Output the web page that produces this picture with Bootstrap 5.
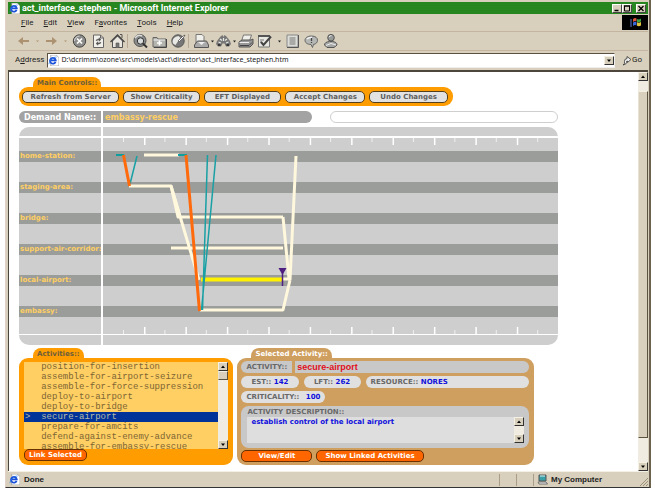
<!DOCTYPE html>
<html lang="en">
<head>
<meta charset="utf-8">
<meta name="viewport" content="width=device-width, initial-scale=1">
<title>act_interface_stephen - Microsoft Internet Explorer</title>
<link href="https://cdn.jsdelivr.net/npm/bootstrap@5.3.0/dist/css/bootstrap.min.css" rel="stylesheet">
<style>
:root{--face:#d8d0bc;--orange:#ff9c00;--tan:#cf9f60;--grey:#cecece;--band:#9b9d9a}
body{background:#fff;font:8px/10px Roboto,"Liberation Sans",Arial,sans-serif;color:#222}
button,select,input,textarea{font:inherit;color:inherit;border:0;padding:0;margin:0;border-radius:0}
a{color:inherit;text-decoration:none}
svg{display:block}
.win{min-height:100vh;padding:0 4px 3px 5px}
.frame{background:var(--face);border-right:2px solid #6b6250;border-bottom:1px solid #333;border-left:1px solid #e0d2c6;padding:2px 1px 0 2px;flex:1}
.titlebar{background:#27861f;color:#fff;font-size:9px;font-weight:700;height:12px;padding:0 2px 0 1px;gap:2px}
.capbtn{width:10px;height:9px;background:var(--face);border:1px solid;border-color:#fff #444 #444 #fff}
.menubar{height:18px;border-bottom:1px solid #c4b5a0}
.menubar nav{gap:10px;padding-left:13px}
.flag{background:#000;width:26px;height:15px}
.tools{height:19px;padding-left:6px;border-bottom:1px solid #c4b5a0}
.tb{width:19px;height:18px;background:none}
.dd{width:9px}.dd.slim{width:3px}
.sepr{width:4px;height:14px;border-left:1px solid #b7a995}
.addr{height:19px;padding:0 2px 1px 7px;gap:3px}
.addrbox{background:#fff;border:1px solid;border-color:#5a5142 #eee #eee #5a5142;height:15px;gap:2px}
.addrbox input{background:none;outline:0;height:12px;font:7px/12px "Noto Sans","Open Sans",sans-serif}
.view{border:1px solid;border-width:2px 0 0 1px;border-color:#4c463c;background:#fff;flex:1}
.page{width:calc(100% - 90px);margin-left:10px;padding:5px 0;font-family:"DejaVu Sans",Verdana,sans-serif;font-weight:700;font-size:7px}
.sbar{width:10px;background:#f0ece2}
.sbtn{width:10px;height:9px;background:var(--face);border:1px solid;border-color:#f4f0e4 #333 #333 #f4f0e4}
.thumb{background:var(--face);border:1px solid;border-color:#f4f0e4 #5b523f #5b523f #e8e2d2}
.t1{flex:10}.t2{flex:346}.t3{flex:24}
.tab{height:10px;border-radius:8px 8px 0 0;padding:0 4px;margin-left:14px;width:max-content;line-height:12px;color:#6d5f3c}
.or{background:var(--orange)}.tn{background:var(--tan)}
.ctrls{width:80.5%;border-radius:9px;padding:4px 5px 3px 3px;display:grid;grid-template-columns:98fr 77fr 78fr 81fr 79fr;gap:4px}
.pillbtn{height:12px;border-radius:5px;border:1px solid #55401c;background:#e2e2e2;color:#5e5e5e;line-height:9px;white-space:nowrap}
.hot{background:#ff6600;color:#fff;border-color:#6b3200}
.demand{display:grid;grid-template-columns:82px 210fr 14fr 229fr;gap:0 2px;margin:5px 0 4px;font-size:8px;line-height:13px}
.demand>*{height:12px}
.dlabel{background:#a3a3a3;color:#fff;border-radius:7px 0 0 7px;padding-left:5px}
.dval{background:#a3a3a3;color:#ffcf63;border-radius:0 7px 7px 0;padding-left:2px}
.dempty{border:1px solid #cfcfcf;border-radius:7px;background:#fff;width:100%;grid-column:4}
.chart{display:grid;grid-template-columns:82px 1fr;gap:2px;border-radius:10px;overflow:hidden;height:218px}
.names{background:var(--grey);overflow:hidden}
.names .cap{height:11px;border-bottom:2px solid #fff;margin-bottom:13px}
.names .lane{height:11px;line-height:11px;margin-bottom:20px;background:var(--band);color:#ffcf63;padding-left:1px;white-space:nowrap}
.names .foot{height:11px;border-top:1px solid #fff;margin-top:-3px}
.plot{width:100%;height:218px;background:var(--grey)}
.panels{display:grid;grid-template-columns:214fr 296fr 20fr;gap:4px;margin-top:3px}
.panelbox{border-radius:9px;padding:4px 5px;height:107px}
.acts{height:87px;background:#ffcf63}
.acts select{appearance:none;-webkit-appearance:none;background:#ffcf63;font:9px/10px "Liberation Mono",monospace;color:#7d6534;scrollbar-width:none;overflow:hidden;outline:0;height:87px;min-width:0}
.acts select::-webkit-scrollbar{display:none}
.acts option{padding:0 0 0 1px;height:10px;min-height:10px;line-height:10px}
.acts option:checked{background:#003399 linear-gradient(#003399,#003399);color:#b5b9a6}
.sel{padding:3px 5px 3px 4px;color:#686868}
.g{background:#c8c8c8}.lt{background:#e0e0e0}
.fields{gap:3px;margin-bottom:3px}
.fld{height:12px;line-height:12px;padding:0 5px;white-space:nowrap}
.trio{display:grid;grid-template-columns:57fr 57fr 163fr;gap:5px;margin-bottom:3px}
.chosen{color:#e0101c;font:700 9px/12px "Liberation Sans",Arial,sans-serif;padding-left:2px}
.val{color:#1010dd}
.desc{border-radius:8px;padding:1px 5px 5px 6px;height:42px;margin:3px 0 2px}
.desc label{height:10px;line-height:11px}
.desc textarea{background:#dedede;color:#1010dd;resize:none;height:26px;line-height:10px;padding:0 4px;outline:0;overflow:hidden}
.status{height:16px;font:700 8px/10px "Liberation Sans",Arial,sans-serif;border-top:1px solid #f4f0e6;padding-left:1px;color:#222}
.cell{height:12px;border-left:1px solid #a99d87}
.zone{width:18%;gap:3px;padding-left:3px}
</style>
<script src="https://cdn.jsdelivr.net/npm/bootstrap@5.3.0/dist/js/bootstrap.bundle.min.js"></script>
</head>
<body>
<svg width="0" height="0" class="position-absolute">
<symbol id="ie" viewBox="0 0 12 12"><path d="M3 0h6l3 3v9H3z" fill="#fff" stroke="#888" stroke-width=".7"/><path d="M8.300 7.500A3.200 3.200 0 1 1 8.500 5.800H3" fill="none" stroke="#1b50d8" stroke-width="1.900"/><path d="M1 10C2 5 6 2 9.500 2.300" fill="none" stroke="#2b7bea" stroke-width=".8"/></symbol>
<symbol id="up" viewBox="0 0 8 7"><path d="M2 5h4L4 2.500z" fill="#000"/></symbol>
<symbol id="dn" viewBox="0 0 8 7"><path d="M2 2.500h4L4 5z" fill="#000"/></symbol>
</svg>
<div class="win d-flex flex-column">
<div class="frame d-flex flex-column">
  <header class="titlebar d-flex align-items-center">
    <svg width="11" height="11"><use href="#ie"/></svg>
    <span class="flex-grow-1">act_interface_stephen - Microsoft Internet Explorer</span>
    <div class="d-flex">
      <button class="capbtn" aria-label="Minimize"><svg width="8" height="7"><path d="M1.500 5.500h4" stroke="#000" stroke-width="1.500"/></svg></button>
      <button class="capbtn" aria-label="Maximize"><svg width="8" height="7"><path d="M1.500 1v5h5V1" fill="none" stroke="#000"/><path d="M1 1h6" stroke="#000" stroke-width="1.500"/></svg></button>
      <button class="capbtn ms-1" aria-label="Close"><svg width="8" height="7"><path d="M1.500 1l5 5M6.500 1l-5 5" stroke="#000" stroke-width="1.300"/></svg></button>
    </div>
  </header>
  <div class="menubar d-flex align-items-center justify-content-between">
    <nav class="d-flex"><a href="#"><u>F</u>ile</a><a href="#"><u>E</u>dit</a><a href="#"><u>V</u>iew</a><a href="#">F<u>a</u>vorites</a><a href="#"><u>T</u>ools</a><a href="#"><u>H</u>elp</a></nav>
    <div class="flag d-flex align-items-center justify-content-center"><svg width="13" height="11" viewBox="0 0 13 11"><path d="M4 2q2-1.500 3.500-.5v3Q6 3.500 4 5z" fill="#d8553a"/><path d="M8 2q2 1 4-.5v3q-2 1.300-4 .5z" fill="#3aa548"/><path d="M4 5.500q2-1.300 3.500-.5v3.500Q6 7.500 4 9z" fill="#3a66d8"/><path d="M8 5.300q2 1 4-.3v3.500q-2 1.300-4 .3z" fill="#e0c33a"/><path d="M1 3h2M1 5h2M1 7h2M1 9h2" stroke="#5b7bd0"/></svg></div>
  </div>
  <div class="tools d-flex align-items-center">
    <button class="tb" aria-label="Back"><svg width="19" height="16" viewBox="0 0 19 16"><path d="M4 8l5-4v3h6v2H9v3z" fill="#ac9271"/></svg></button>
    <svg class="dd" height="8" viewBox="0 0 9 8"><path d="M3 3.500h3L4.500 5z" fill="#ac9271"/></svg>
    <button class="tb" aria-label="Forward"><svg width="19" height="16" viewBox="0 0 19 16"><path d="M15 8l-5-4v3H4v2h6v3z" fill="#ac9271"/></svg></button>
    <svg class="dd" height="8" viewBox="0 0 9 8"><path d="M3 3.500h3L4.500 5z" fill="#ac9271"/></svg>
    <button class="tb" aria-label="Stop"><svg width="19" height="16" viewBox="0 0 19 16"><circle cx="9.500" cy="8" r="6.200" fill="#8c8c8a" stroke="#444"/><path d="M4.500 8a5 5 0 0 1 5-5" stroke="#ddd" fill="none"/><path d="M7 5.500l5 5M12 5.500l-5 5" stroke="#fff" stroke-width="1.700"/></svg></button>
    <button class="tb" aria-label="Refresh"><svg width="19" height="16" viewBox="0 0 19 16"><path d="M4.500 2h7l3 3v9.500h-10z" fill="#f2f0ea" stroke="#666"/><path d="M11.500 2v3h3" fill="none" stroke="#666"/><path d="M7 8q0-2 3-2V4.800L12 6.500l-2 1.700V7M12 9q0 2-3 2v1.200L7 10.500 9 8.800V10" fill="#555" stroke="#555" stroke-width=".5"/></svg></button>
    <button class="tb" aria-label="Home"><svg width="19" height="16" viewBox="0 0 19 16"><path d="M4.500 8v6.500h10V8l-5-5z" fill="#e9e7e0" stroke="#555"/><path d="M2.500 9l7-7 7 7" fill="none" stroke="#444" stroke-width="1.300"/><path d="M12 1.500h2V5" fill="none" stroke="#555"/><path d="M8 14.500V10h3v4.500" fill="#777" stroke="#555" stroke-width=".6"/></svg></button>
    <span class="sepr"></span>
    <button class="tb" aria-label="Search"><svg width="19" height="16" viewBox="0 0 19 16"><circle cx="9" cy="7.500" r="6" fill="#8a8c8c" stroke="#555"/><path d="M4 5q3-4 7-2" stroke="#ddd" stroke-width="1.500" fill="none"/><circle cx="9.500" cy="8" r="3.200" fill="#d8dcdc" stroke="#333"/><path d="M12 10.500l4 4" stroke="#333" stroke-width="2"/></svg></button>
    <button class="tb" aria-label="Favorites"><svg width="19" height="16" viewBox="0 0 19 16"><path d="M3 4.500h4l1 1.500h8v8H3z" fill="#b5b5b0" stroke="#666"/><path d="M3.500 7H15" stroke="#eee"/><path d="M9.500 7.500v5M7 10h5" stroke="#fff" stroke-width="1.600"/><path d="M16.500 6v8.500H4" fill="none" stroke="#444"/></svg></button>
    <button class="tb" aria-label="History"><svg width="19" height="16" viewBox="0 0 19 16"><circle cx="9" cy="8" r="6.200" fill="#777" stroke="#555"/><path d="M3.500 9q0-5 6-6l2 2-3 4-2 3q-3-1-3-3z" fill="#e8e8e4"/><path d="M9 8l5-5 2-1-1 2-5 5z" fill="#fff" stroke="#333" stroke-width=".6"/></svg></button>
    <span class="sepr"></span>
    <button class="tb" aria-label="Mail"><svg width="19" height="16" viewBox="0 0 19 16"><path d="M4 1.500h6l2 2V10H4z" fill="#f0efea" stroke="#777"/><path d="M2.500 12l3-4h9l2 4v2.500h-14z" fill="#aaa" stroke="#555"/><path d="M6 9h7l-3.500 3z" fill="#eee"/></svg></button>
    <svg class="dd slim" height="8" viewBox="0 0 3 8"><path d="M0 3.500h3L1.500 5.500z" fill="#222"/></svg>
    <button class="tb" aria-label="Find"><svg width="19" height="16" viewBox="0 0 19 16"><path d="M6.500 3.500L8.500 2l1 2 1-2 2 1.500 3.500 4.500 1 3-2 2.500h-3l-1.500-3h-2L7 13.500H4L2 11l1-3z" fill="#777"/><path d="M6 6l2 1.500M13 6l-2 1.500M4.500 9l2.500 1M14.500 9L12 10M9.500 5v3" stroke="#e8e8e4" stroke-width="1.200"/><path d="M4 12h2.500M12.500 12H15" stroke="#222" stroke-width="1.300"/></svg></button>
    <svg class="dd slim" height="8" viewBox="0 0 3 8"><path d="M0 3.500h3L1.500 5.500z" fill="#222"/></svg>
    <button class="tb" aria-label="Print"><svg width="19" height="16" viewBox="0 0 19 16"><path d="M7.500 2h8l-2 6h-8z" fill="#f0efea" stroke="#777"/><path d="M3 9l3-2h9l2-1v5l-3 3H3z" fill="#999" stroke="#555"/><path d="M3.500 9.500H13" stroke="#eee"/><path d="M4 12.500h9l3-3" stroke="#444" fill="none"/></svg></button>
    <button class="tb" aria-label="Edit"><svg width="19" height="16" viewBox="0 0 19 16"><path d="M3.500 3h11v11h-11z" fill="#e8e7e2" stroke="#777"/><path d="M3 3h12" stroke="#555" stroke-width="2"/><path d="M5 7h4M5 9h2" stroke="#777"/><path d="M6 9l2.500 3L16 3.500" fill="none" stroke="#444" stroke-width="2"/></svg></button>
    <svg class="dd" height="8" viewBox="0 0 9 8"><path d="M4 3.500h3L5.500 5.500z" fill="#222"/></svg>
    <button class="tb" aria-label="Discuss"><svg width="19" height="16" viewBox="0 0 19 16"><path d="M4 2h11v12H4z" fill="#dcdcd8" stroke="#888"/><path d="M15.500 2v12.500H4" fill="none" stroke="#555"/><path d="M6.500 5h6M6.500 7h6M6.500 9h6M6.500 11h6" stroke="#777"/></svg></button>
    <button class="tb" aria-label="Chat"><svg width="19" height="16" viewBox="0 0 19 16"><path d="M9.500 3c4 0 6 2 6 4.200s-1.500 4-4 4.200L10.500 14.500 9 11.500C5 11.500 3 9.500 3 7.200S5.500 3 9.500 3z" fill="#b5b7b5" stroke="#666"/><path d="M5 6q2-2 5-1.500" stroke="#f4f4f4" stroke-width="1.500" fill="none"/><path d="M9.500 5v3M9.500 9v1" stroke="#444" stroke-width="1.300"/></svg></button>
    <button class="tb" aria-label="Messenger"><svg width="19" height="16" viewBox="0 0 19 16"><circle cx="10" cy="4.700" r="3.300" fill="#999b99" stroke="#555"/><path d="M8 4q1-1.500 2.500-1.300" stroke="#eee" fill="none"/><path d="M3.500 12q0-3 5-3.500h3q4.500.5 4.500 3.500l-3 2.500H6z" fill="#a5a7a5" stroke="#555"/><path d="M5 12.500l5-2 5 1.500" stroke="#eee" fill="none"/></svg></button>
  </div>
  <div class="addr d-flex align-items-center">
    <label for="url">A<u>d</u>dress</label>
    <div class="addrbox d-flex align-items-center flex-grow-1">
      <svg class="flex-shrink-0" width="11" height="11"><use href="#ie"/></svg>
      <input id="url" class="flex-grow-1" value="D:\dcrimm\ozone\src\models\act\director\act_interface_stephen.htm">
      <button class="sbtn" aria-label="Show addresses"><svg width="8" height="7"><use href="#dn"/></svg></button>
    </div>
    <button class="bg-transparent d-flex align-items-center ms-1 me-1"><svg width="10" height="11" viewBox="0 0 10 11"><path d="M1 10Q3 9 2.500 6.500T5 3.500V1.500L9 4.500 5.500 7.500V6Q4 6 4.500 7.500T1 10z" fill="#eee" stroke="#444" stroke-width=".9"/></svg>Go</button>
  </div>

  <div class="view d-flex">
    <main class="flex-grow-1">
      <div class="page">
        <div class="tab or">Main Controls::</div>
        <div class="ctrls or">
          <button class="pillbtn">Refresh from Server</button><button class="pillbtn">Show Criticality</button><button class="pillbtn">EFT Displayed</button><button class="pillbtn">Accept Changes</button><button class="pillbtn">Undo Changes</button>
        </div>
        <div class="demand">
          <div class="dlabel">Demand Name::</div>
          <div class="dval">embassy-rescue</div>
          <input class="dempty" aria-label="Message">
        </div>
        <div class="chart">
          <div class="names">
            <div class="cap"></div>
            <div class="lane">home-station:</div><div class="lane">staging-area:</div><div class="lane">bridge:</div><div class="lane">support-air-corridor:</div><div class="lane">local-airport:</div><div class="lane">embassy:</div>
            <div class="foot"></div>
          </div>
          <svg class="plot" viewBox="103 127 455 218" preserveAspectRatio="none">
            <path d="M103 156.500h455M103 187.500h455M103 218.500h455M103 249.500h455M103 280.500h455M103 311.500h455" stroke="#9b9d9a" stroke-width="11"/>
            <path d="M103 137h455" stroke="#fff" stroke-width="2"/><path d="M103 334.500h455" stroke="#fff"/>
            <path d="M144 141.500h415" stroke="#fff" stroke-width="7" stroke-dasharray="1.500 39.920"/>
            <path d="M123 140h435" stroke="#f0f0f0" stroke-width="4" stroke-dasharray="1 40.420"/>
            <path d="M144 330.500h415" stroke="#fff" stroke-width="7" stroke-dasharray="1.500 39.920"/>
            <path d="M123 332h435" stroke="#f0f0f0" stroke-width="4" stroke-dasharray="1 40.420"/>
            <g fill="none" stroke="#fff8dc" stroke-width="3">
              <path d="M144 155h35M129 186h42l7 31h105M171 186l28 94M171 248h112M283 217l6 62h-6M200 310h83l7-30" stroke-linejoin="round"/>
              <path d="M171 186l9 31M296 156l-6 124"/>
            </g>
            <path d="M201 279.500h81" stroke="#fff200" stroke-width="4"/>
            <path d="M116 155h8M178 155h9" stroke="#0f9f9f" stroke-width="2"/>
            <path d="M137 156l-7 28M207.500 155l-5 155M216 155l-14.500 155" stroke="#18a0a4" stroke-width="1.500" fill="none"/>
            <path d="M123.500 155l6 31M186 155l13.500 156" stroke="#ff6a0d" stroke-width="3"/>
            <path d="M282.500 268v18" stroke="#4f1f80" stroke-width="1.500"/><path d="M278.500 268h8l-4 7z" fill="#4f1f80"/>
          </svg>
        </div>
        <div class="panels">
          <section>
            <div class="tab or">Activities::</div>
            <div class="panelbox or">
              <div class="acts d-flex">
                <select size="9" class="flex-grow-1" aria-label="Activities">
                  <option>&nbsp;&nbsp;&nbsp;position-for-insertion</option><option>&nbsp;&nbsp;&nbsp;assemble-for-airport-seizure</option><option>&nbsp;&nbsp;&nbsp;assemble-for-force-suppression</option><option>&nbsp;&nbsp;&nbsp;deploy-to-airport</option><option>&nbsp;&nbsp;&nbsp;deploy-to-bridge</option><option selected>&gt;&nbsp;&nbsp;secure-airport</option><option>&nbsp;&nbsp;&nbsp;prepare-for-amcits</option><option>&nbsp;&nbsp;&nbsp;defend-against-enemy-advance</option><option>&nbsp;&nbsp;&nbsp;assemble-for-embassy-rescue</option>
                </select>
                <div class="sbar d-flex flex-column">
                  <button class="sbtn" aria-label="Scroll up"><svg width="8" height="7"><use href="#up"/></svg></button>
                  <div class="thumb sbtn"></div>
                  <button class="sbtn mt-auto" aria-label="Scroll down"><svg width="8" height="7"><use href="#dn"/></svg></button>
                </div>
              </div>
              <button class="pillbtn hot px-1 d-block">Link Selected</button>
            </div>
          </section>
          <section>
            <div class="tab tn text-white">Selected Activity::</div>
            <div class="panelbox tn sel">
              <div class="d-flex fields">
                <div class="fld g rounded-start-pill">ACTIVITY::</div>
                <div class="fld g rounded-end-pill flex-grow-1 chosen">secure-airport</div>
              </div>
              <div class="trio">
                <div class="fld lt rounded-pill text-center">EST:: <span class="val">142</span></div>
                <div class="fld lt rounded-pill text-center">LFT:: <span class="val">262</span></div>
                <div class="fld lt rounded-pill">RESOURCE:: <span class="val">NORES</span></div>
              </div>
              <div class="d-flex"><div class="fld lt rounded-pill">CRITICALITY:: <span class="val ms-1">100</span></div></div>
              <div class="desc g">
                <label for="desc" class="d-block">ACTIVITY DESCRIPTION::</label>
                <div class="d-flex">
                  <textarea id="desc" class="flex-grow-1">establish control of the local airport</textarea>
                  <div class="sbar d-flex flex-column justify-content-between">
                    <button class="sbtn" aria-label="Scroll up"><svg width="8" height="7"><use href="#up"/></svg></button>
                    <button class="sbtn" aria-label="Scroll down"><svg width="8" height="7"><use href="#dn"/></svg></button>
                  </div>
                </div>
              </div>
              <div class="d-flex gap-1"><button class="pillbtn hot px-3">View/Edit</button><button class="pillbtn hot px-2">Show Linked Activities</button></div>
            </div>
          </section>
        </div>
      </div>
    </main>
    <div class="sbar d-flex flex-column">
      <button class="sbtn" aria-label="Scroll up"><svg width="8" height="7"><use href="#up"/></svg></button>
      <div class="t1"></div><div class="thumb t2"></div><div class="t3"></div>
      <button class="sbtn" aria-label="Scroll down"><svg width="8" height="7"><use href="#dn"/></svg></button>
    </div>
  </div>
  <footer class="status d-flex align-items-center">
    <svg width="11" height="11"><use href="#ie"/></svg><span class="ms-1 flex-grow-1">Done</span>
    <span class="cell px-2"></span><span class="cell px-2"></span>
    <span class="cell zone d-flex align-items-center"><svg width="11" height="11" viewBox="0 0 11 11"><path d="M2 1h7v6H2z" fill="#3aa0a8" stroke="#555"/><path d="M3 2h5" stroke="#d8f0f0"/><path d="M1 8h8l1.500 2H2z" fill="#eee" stroke="#555" stroke-width=".8"/></svg>My Computer
      <svg class="ms-auto align-self-end" width="9" height="9"><path d="M1 9l8-8M4 9l5-5M7 9l2-2" stroke="#9c8f78"/></svg></span>
  </footer>
</div>
</div>
</body>
</html>
